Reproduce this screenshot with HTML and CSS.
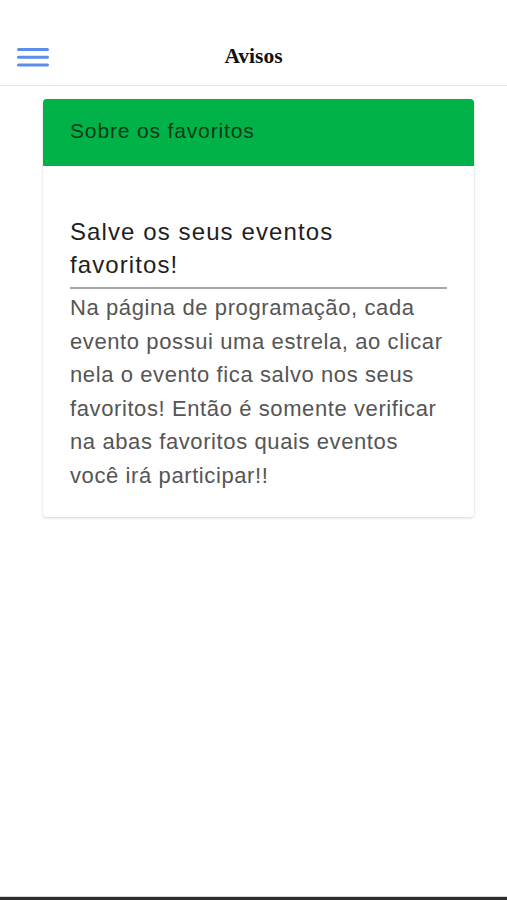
FILE: index.html
```html
<!DOCTYPE html>
<html lang="pt-BR">
<head>
    <meta charset="UTF-8">
    <meta name="viewport" content="width=device-width, initial-scale=1.0">
    <title>Avisos</title>
    <link rel="stylesheet" href="styles.css">
</head>
<body>
    <!-- Top bar -->
    <header class="top-bar">
        <button class="menu-btn" aria-label="Menu">
            <svg width="32" height="19" viewBox="0 0 32 19">
                <rect x="0" y="0" width="32" height="3" rx="1.5" fill="#5b8def"/>
                <rect x="0" y="7.7" width="32" height="3" rx="1.5" fill="#5b8def"/>
                <rect x="0" y="15.4" width="32" height="3" rx="1.5" fill="#5b8def"/>
            </svg>
        </button>
        <h1 class="page-title">Avisos</h1>
    </header>

    <main class="content">
        <!-- Notice card -->
        <section class="card">
            <div class="card-header">Sobre os favoritos</div>
            <div class="card-body">
                <h2 class="card-title">Salve os seus eventos favoritos!</h2>
                <p class="card-text">Na página de programação, cada evento possui uma estrela, ao clicar nela o evento fica salvo nos seus favoritos! Então é somente verificar na abas favoritos quais eventos você irá participar!!</p>
            </div>
        </section>
    </main>

    <div class="bottom-edge"></div>
</body>
</html>
```

FILE: styles.css
```css
html, body {
    height: 100%;
}

body {
    margin: 0;
    font-family: "Liberation Sans", Arial, sans-serif;
    background-color: #fff;
    color: #333;
    display: flex;
    flex-direction: column;
}

.top-bar {
    height: 86px;
    border-bottom: 1px solid #e6e6e6;
    display: flex;
    align-items: center;
    justify-content: center;
    position: relative;
    box-sizing: border-box;
    padding-top: 28px;
}

.menu-btn {
    position: absolute;
    left: 17px;
    top: 48px;
    padding: 0;
    border: none;
    background: none;
    line-height: 0;
}

.page-title {
    margin: 0;
    font-family: "Liberation Serif", "Times New Roman", serif;
    font-size: 21.5px;
    font-weight: bold;
    color: #111;
}

.content {
    flex: 1;
    padding: 13px 33px 0 43px;
}

.card {
    background-color: #fff;
    border-radius: 4px;
    box-shadow: 0 1px 3px rgba(0, 0, 0, 0.18);
    overflow: hidden;
}

.card-header {
    background-color: #00b247;
    color: #0a3a18;
    font-size: 21px;
    letter-spacing: 0.85px;
    height: 67px;
    box-sizing: border-box;
    padding: 20px 27px 0;
}

.card-body {
    padding: 49px 27px 24px;
}

.card-title {
    margin: 0;
    font-size: 24px;
    font-weight: normal;
    letter-spacing: 1.1px;
    line-height: 33px;
    color: #1e1e1e;
    padding-bottom: 6px;
    border-bottom: 2px solid #a6a6a6;
}

.card-text {
    margin: 0;
    padding-top: 2px;
    font-size: 22px;
    letter-spacing: 0.6px;
    line-height: 33.6px;
    color: #555;
}

.bottom-edge {
    height: 3px;
    background-color: #2e2e2e;
    border-top: 1px solid #d8d8d8;
}
```
